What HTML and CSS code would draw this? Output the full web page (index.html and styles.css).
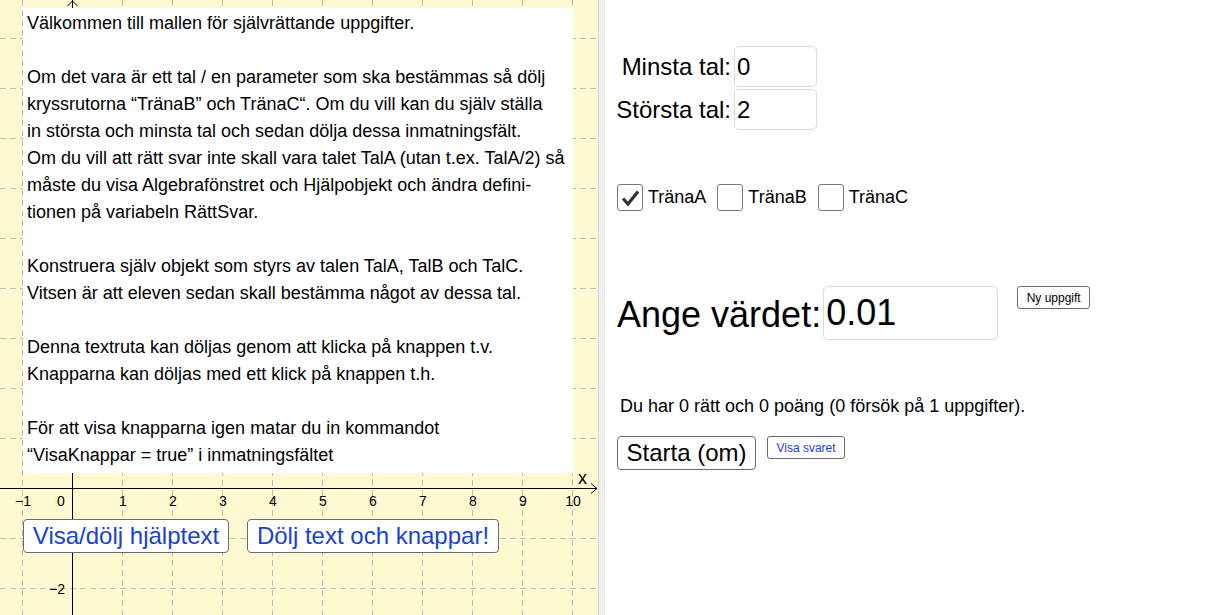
FILE: index.html
```html
<!DOCTYPE html>
<html lang="sv">
<head>
    <meta charset="UTF-8">
    <meta name="viewport" content="width=device-width, initial-scale=1.0">
    <title>Självrättande uppgifter</title>
    <link rel="stylesheet" href="styles.css">
</head>
<body>
    <div class="applet">
        <div class="graphics">
            <svg class="grid" width="598" height="615" viewBox="0 0 598 615">
                <path class="gridlines" d="M22.5 0V615M122.5 0V615M172.5 0V615M222.5 0V615M272.5 0V615M322.5 0V615M372.5 0V615M422.5 0V615M472.5 0V615M522.5 0V615M572.5 0V615M0 38.5H598M0 88.5H598M0 138.5H598M0 188.5H598M0 238.5H598M0 288.5H598M0 338.5H598M0 388.5H598M0 438.5H598M0 538.5H598M0 588.5H598"/>
                <path class="axis" d="M0 488.5H597M591 483.5L597 488.5L591 493.5M72.5 0V615M67.5 6L72.5 1L77.5 6"/>
                <g class="ticks">
                    <text x="23" y="506">−1</text>
                    <text x="61" y="506">0</text>
                    <text x="123" y="506">1</text>
                    <text x="173" y="506">2</text>
                    <text x="223" y="506">3</text>
                    <text x="273" y="506">4</text>
                    <text x="323" y="506">5</text>
                    <text x="373" y="506">6</text>
                    <text x="423" y="506">7</text>
                    <text x="473" y="506">8</text>
                    <text x="523" y="506">9</text>
                    <text x="573" y="506">10</text>
                    <text x="57" y="594">−2</text>
                </g>
                <text class="axisname" x="578" y="484">x</text>
            </svg>

            <div class="helptext">
                <p>Välkommen till mallen för självrättande uppgifter.</p>
                <p>Om det vara är ett tal / en parameter som ska bestämmas så dölj<br>
                kryssrutorna “TränaB” och TränaC“. Om du vill kan du själv ställa<br>
                in största och minsta tal och sedan dölja dessa inmatningsfält.<br>
                Om du vill att rätt svar inte skall vara talet TalA (utan t.ex. TalA/2) så<br>
                måste du visa Algebrafönstret och Hjälpobjekt och ändra defini-<br>
                tionen på variabeln RättSvar.</p>
                <p>Konstruera själv objekt som styrs av talen TalA, TalB och TalC.<br>
                Vitsen är att eleven sedan skall bestämma något av dessa tal.</p>
                <p>Denna textruta kan döljas genom att klicka på knappen t.v.<br>
                Knapparna kan döljas med ett klick på knappen t.h.</p>
                <p>För att visa knapparna igen matar du in kommandot<br>
                “VisaKnappar = true” i inmatningsfältet</p>
            </div>

            <div class="gbuttons">
                <button class="gbtn help">Visa/dölj hjälptext</button>
                <button class="gbtn hide">Dölj text och knappar!</button>
            </div>
        </div>

        <div class="divider"></div>

        <div class="panel">
            <div class="range">
                <label for="minsta">Minsta tal:</label>
                <input class="field" id="minsta" type="text" value="0">
                <label for="storsta">Största tal:</label>
                <input class="field" id="storsta" type="text" value="2">
            </div>

            <div class="checks">
                <label class="check">
                    <span class="box"><svg width="24" height="24" viewBox="0 0 24 24"><path d="M5 12.5L10 18L20 5.5"/></svg></span>TränaA
                </label>
                <label class="check"><span class="box"></span>TränaB</label>
                <label class="check"><span class="box"></span>TränaC</label>
            </div>

            <div class="answer">
                <label for="svar">Ange värdet:</label>
                <input class="field big" id="svar" type="text" value="0.01">
                <button class="small new">Ny uppgift</button>
            </div>

            <p class="status">Du har 0 rätt och 0 poäng (0 försök på 1 uppgifter).</p>

            <div class="actions">
                <button class="start">Starta (om)</button>
                <button class="small show">Visa svaret</button>
            </div>
        </div>
    </div>
</body>
</html>
```

FILE: styles.css
```css
body {
    margin: 0;
    font-family: "Liberation Sans", Arial, sans-serif;
    color: #000;
    background: #fff;
    overflow: hidden;
}
.applet {
    display: flex;
    width: 1207px;
    height: 615px;
}

/* grafikfönstret */
.graphics {
    position: relative;
    width: 598px;
    height: 615px;
    flex: none;
    background-color: #fef9d0;
    overflow: hidden;
}
.grid {
    position: absolute;
    left: 0;
    top: 0;
}
.gridlines {
    fill: none;
    stroke: #bdbdbd;
    stroke-width: 1;
    stroke-dasharray: 6 4;
}
.axis {
    fill: none;
    stroke: #000;
    stroke-width: 1;
}
.ticks text {
    font-family: "Liberation Sans", Arial, sans-serif;
    font-size: 14px;
    text-anchor: middle;
    fill: #000;
}
.axisname {
    font-family: "Liberation Sans", Arial, sans-serif;
    font-size: 18px;
    fill: #000;
}
.helptext {
    position: relative;
    margin: 8px 0 0 23px;
    width: 550px;
    height: 465px;
    box-sizing: border-box;
    padding: 2px 0 0 4px;
    background-color: #fff;
    font-size: 18px;
    line-height: 27px;
    white-space: nowrap;
}
.helptext p {
    margin: 0 0 27px;
}
.gbuttons {
    position: relative;
    display: flex;
    gap: 18px;
    margin: 46px 0 0 23px;
}
.gbtn {
    height: 34px;
    padding: 0;
    border: 1px solid #6b6b6b;
    border-radius: 4px;
    background: #fff;
    color: #1a43c9;
    font-family: "Liberation Sans", Arial, sans-serif;
    font-size: 24px;
    line-height: 32px;
    white-space: nowrap;
}
.gbtn.help {
    width: 206px;
}
.gbtn.hide {
    width: 252px;
}

.divider {
    width: 5px;
    flex: none;
    background-color: #f0f0f0;
    border-left: 1px solid #d6d6d6;
    border-right: 1px solid #e2e2e2;
}

/* grafikfönster 2 */
.panel {
    flex: 1;
    padding-left: 10px;
}
.range {
    display: grid;
    grid-template-columns: 116px 83px;
    grid-auto-rows: 41px;
    column-gap: 3px;
    row-gap: 2px;
    margin-top: 46px;
}
.range label {
    align-self: center;
    text-align: right;
    font-size: 24px;
}
.field {
    box-sizing: border-box;
    height: 41px;
    padding: 0 2px;
    border: 1px solid #dadada;
    border-radius: 5px;
    font-family: "Liberation Sans", Arial, sans-serif;
    font-size: 24px;
    color: #000;
    outline: none;
}
.checks {
    display: flex;
    gap: 11px;
    margin: 54px 0 0 2px;
}
.check {
    display: flex;
    align-items: center;
    gap: 5px;
    font-size: 18px;
}
.box {
    box-sizing: border-box;
    display: flex;
    align-items: center;
    justify-content: center;
    width: 26px;
    height: 27px;
    border: 1px solid #7a7a7a;
    border-radius: 3px;
    background: #fff;
}
.box path {
    fill: none;
    stroke: #333;
    stroke-width: 3.2;
}
.answer {
    display: flex;
    align-items: flex-start;
    margin: 75px 0 0 2px;
}
.answer label {
    align-self: center;
    margin-top: 3px;
    font-size: 36px;
}
.field.big {
    width: 175px;
    height: 54px;
    margin-left: 2px;
    font-size: 36px;
}
.small {
    box-sizing: border-box;
    height: 23px;
    padding: 0;
    border: 1px solid #6b6b6b;
    border-radius: 3px;
    background: #fff;
    font-family: "Liberation Sans", Arial, sans-serif;
    font-size: 12px;
    line-height: 14px;
}
.new {
    width: 73px;
    margin: 0 0 0 19px;
    color: #000;
}
.status {
    margin: 56px 0 0 5px;
    font-size: 18px;
}
.actions {
    display: flex;
    align-items: flex-start;
    gap: 11px;
    margin: 19px 0 0 2px;
}
.start {
    box-sizing: border-box;
    width: 139px;
    height: 34px;
    padding: 0;
    border: 1px solid #6b6b6b;
    border-radius: 4px;
    background: #fff;
    color: #000;
    font-family: "Liberation Sans", Arial, sans-serif;
    font-size: 24px;
}
.show {
    width: 78px;
    color: #1a43c9;
}
```
